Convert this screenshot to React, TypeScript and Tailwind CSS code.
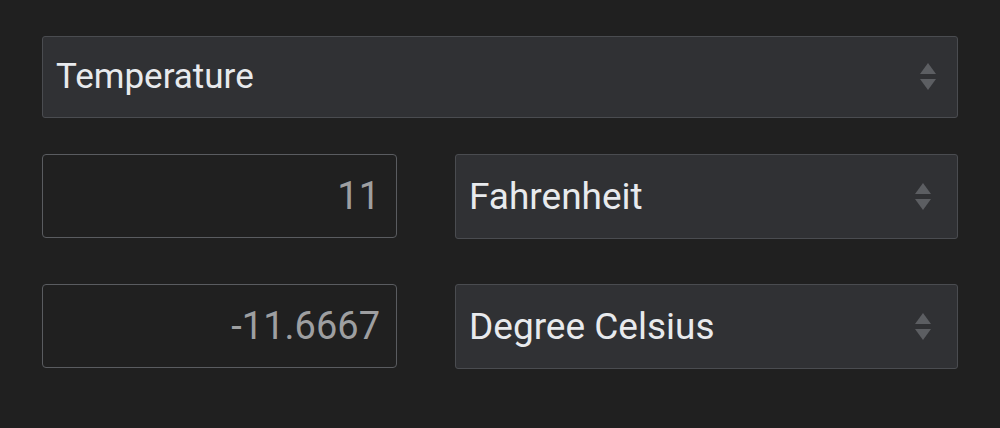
import React from "react";

function Arrows() {
  return (
    <svg width="18" height="30" viewBox="0 0 18 30" className="shrink-0">
      <path d="M9 1 L17 12 L1 12 Z" fill="#5c5e62" />
      <path d="M1 17 L17 17 L9 28 Z" fill="#5c5e62" />
    </svg>
  );
}

function Select({ label, big }: { label: string; big?: boolean }) {
  return (
    <div
      className={`flex items-center justify-between bg-[#303134] border border-[#4a4c50] rounded-[3px] pl-[13px] ${
        big ? "h-[82px] pr-[20px]" : "h-[85px] pr-[25px]"
      }`}
    >
      <span className={`text-[#e8eaed] ${big ? "text-[35px]" : "text-[37px]"}`}>{label}</span>
      <Arrows />
    </div>
  );
}

function NumberInput({ value }: { value: string }) {
  return (
    <div className="flex items-center justify-end h-[84px] border border-[#5a5c60] rounded-[4px] pr-[16px]">
      <span className="text-[38px] text-[#9e9fa1]">{value}</span>
    </div>
  );
}

export default function App() {
  return (
    <div
      className="w-[1000px] h-[428px] bg-[#202020] px-[42px] pt-[36px]"
      style={{ fontFamily: "Roboto, 'Noto Sans', sans-serif" }}
    >
      <Select label="Temperature" big />
      <div className="grid grid-cols-[355px_503px] items-start gap-x-[58px] gap-y-[45px] mt-[36px]">
        <NumberInput value="11" />
        <Select label="Fahrenheit" />
        <NumberInput value="-11.6667" />
        <Select label="Degree Celsius" />
      </div>
    </div>
  );
}
